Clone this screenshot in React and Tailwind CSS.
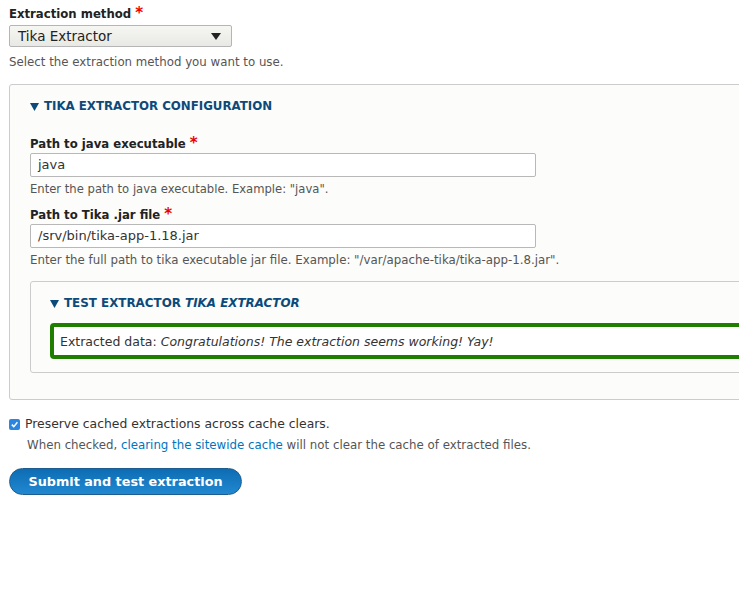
function Req() {
  return <span className="text-[#e00] text-[15px] leading-[0] relative top-[-2px]">*</span>;
}

export default function App() {
  const font = { fontFamily: '"DejaVu Sans", "Verdana", sans-serif' };
  return (
    <div className="w-[739px] h-[605px] overflow-hidden bg-white text-[#333]" style={font}>
      <div className="pl-[9px] pt-[4px]">
        {/* Extraction method */}
        <div className="h-[18px] pt-[3px] flex items-center text-[11.7px] font-bold text-[#222]">
          <span>Extraction method&nbsp;</span><Req />
        </div>
        <div className="mt-[3px] w-[223px] h-[22px] border border-[#b5b5b5] rounded-[2px] bg-gradient-to-b from-[#f6f6f3] to-[#e8e8e4] flex items-center justify-between pl-[8px] pr-[10px]">
          <span className="text-[13.5px] text-[#222]">Tika Extractor</span>
          <svg width="10" height="7" viewBox="0 0 10 7"><path d="M0 0h10L5 7z" fill="#222" /></svg>
        </div>
        <div className="mt-[6px] h-[16px] pt-[3px] flex items-center text-[11.8px] text-[#555]">Select the extraction method you want to use.</div>

        {/* Outer fieldset */}
        <div className="mt-[15px] w-[780px] h-[316px] border border-[#ccc] rounded-[3px] bg-[#fcfcfa] pl-[20px] pt-[10px]">
          <div className="flex items-center h-[20px] pt-[4px] text-[11.8px] font-bold uppercase text-[#0b4a7a]">
            <svg width="9" height="8" viewBox="0 0 9 8" className="mr-[5px]"><path d="M0 0h9L4.5 8z" fill="#0b4a7a" /></svg>
            Tika Extractor Configuration
          </div>

          <div className="mt-[19px] h-[18px] pt-[3px] flex items-center text-[11.7px] font-bold text-[#222]">
            <span>Path to java executable&nbsp;</span><Req />
          </div>
          <div className="mt-[1px] w-[506px] h-[24px] border border-[#b8b8b8] rounded-[2px] bg-white flex items-center pl-[7px] text-[13px] text-[#333]">java</div>
          <div className="mt-[3px] h-[16px] pt-[3px] flex items-center text-[11.6px] text-[#555]">Enter the path to java executable. Example: "java".</div>

          <div className="mt-[9px] h-[18px] pt-[3px] flex items-center text-[11.7px] font-bold text-[#222]">
            <span>Path to Tika .jar file&nbsp;</span><Req />
          </div>
          <div className="mt-[1px] w-[506px] h-[24px] border border-[#b8b8b8] rounded-[2px] bg-white flex items-center pl-[7px] text-[13px] text-[#333]">/srv/bin/tika-app-1.18.jar</div>
          <div className="mt-[3px] h-[16px] pt-[3px] flex items-center text-[11.8px] text-[#555]">Enter the full path to tika executable jar file. Example: "/var/apache-tika/tika-app-1.8.jar".</div>

          {/* Inner fieldset */}
          <div className="mt-[14px] w-[760px] h-[92px] border border-[#ccc] rounded-[3px] bg-[#fcfcfa] pl-[19px] pt-[11px]">
            <div className="flex items-center h-[18px] pt-[4px] text-[11.9px] font-bold uppercase text-[#0b4a7a]">
              <svg width="9" height="8" viewBox="0 0 9 8" className="mr-[5px]"><path d="M0 0h9L4.5 8z" fill="#0b4a7a" /></svg>
              Test extractor&nbsp;<span className="italic">Tika Extractor</span>
            </div>
            <div className="mt-[12px] w-[720px] h-[36px] border-[4px] border-[#1f7e00] rounded-[4px] bg-white flex items-center pt-[2px] pl-[6px] text-[12.5px] text-[#333]">
              Extracted data:&nbsp;<span className="italic">Congratulations! The extraction seems working! Yay!</span>
            </div>
          </div>
        </div>

        {/* Checkbox */}
        <div className="mt-[15px] flex items-center h-[16px]">
          <span className="w-[11px] h-[11px] mt-[2px] rounded-[2px] bg-[#2a86e0] flex items-center justify-center">
            <svg width="9" height="9" viewBox="0 0 9 9"><path d="M1.8 4.6l2 2L7.4 2.2" stroke="#fff" strokeWidth="1.5" fill="none" /></svg>
          </span>
          <span className="ml-[5px] pt-[2px] text-[12.4px] text-[#333]">Preserve cached extractions across cache clears.</span>
        </div>
        <div className="mt-[5px] ml-[18px] h-[16px] pt-[3px] flex items-center text-[11.8px] text-[#555]">
          <span>When checked,&nbsp;</span><span className="text-[#0074bd]">clearing the sitewide cache</span><span>&nbsp;will not clear the cache of extracted files.</span>
        </div>

        <div className="mt-[16px] w-[233px] h-[27px] rounded-full border border-[#1e5c90] bg-gradient-to-b from-[#0c6db4] to-[#2188d0] flex items-center justify-center text-white font-bold text-[12.8px]">
          Submit and test extraction
        </div>
      </div>
    </div>
  );
}
